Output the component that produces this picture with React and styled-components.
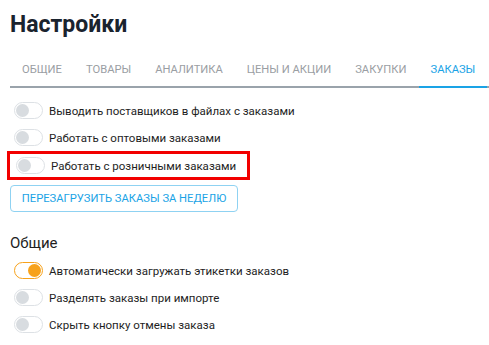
import React, { useState } from "react"
import styled, { createGlobalStyle } from "styled-components"

const GlobalStyle = createGlobalStyle`
  html, body {
    margin: 0;
    padding: 0;
    background: #fff;
  }
  body {
    font-family: Roboto, "Liberation Sans", sans-serif;
    color: #222;
  }
`

const Page = styled.div`
  padding: 9px 0 0 10px;
`

const Title = styled.h1`
  margin: 0;
  font-family: Roboto, "Liberation Sans", sans-serif;
  font-weight: 700;
  font-size: 23px;
  line-height: 32px;
  color: #1a232e;
`

const Tabs = styled.div`
  display: flex;
  margin-top: 13px;
  border-bottom: 2px solid #9aa3ab;
`

const Tab = styled.div`
  box-sizing: border-box;
  padding: 0 12px;
  height: 34px;
  line-height: 32px;
  white-space: nowrap;
  font-size: 11.2px;
  text-transform: uppercase;
  color: ${(p) => (p.active ? "#1aa3e6" : "#9a9ea3")};
  margin-bottom: -2px;
  border-bottom: 2px solid ${(p) => (p.active ? "#1aa3e6" : "transparent")};
  cursor: pointer;
`

const List = styled.div`
  display: flex;
  flex-direction: column;
  margin-top: 9px;
`

const Row = styled.label`
  display: flex;
  align-items: center;
  gap: 6px;
  height: 27px;
  padding-left: 4px;
  font-size: 11.5px;
  white-space: nowrap;
  color: #1e1e1e;
  cursor: pointer;
`

const Highlight = styled.div`
  margin-left: -3px;
  width: 243px;
  border: 3px solid #f20000;
  box-sizing: border-box;
  padding-left: 2px;
  height: 29px;
  display: flex;
  align-items: center;
`

const Track = styled.span`
  position: relative;
  box-sizing: border-box;
  width: 29px;
  height: 17px;
  border-radius: 9px;
  border: 1px solid ${(p) => (p.on ? "#f7a21b" : "#dde1e5")};
  background: #fff;
  flex: none;
`

const Knob = styled.span`
  position: absolute;
  top: 1px;
  left: ${(p) => (p.on ? "13px" : "1px")};
  width: 13px;
  height: 13px;
  border-radius: 50%;
  background: ${(p) => (p.on ? "#f7a21b" : "#d8dce0")};
`

const Button = styled.button`
  align-self: flex-start;
  margin-top: 5px;
  height: 27px;
  width: 228px;
  padding: 0;
  border: 1px solid #8fd2f2;
  border-radius: 4px;
  background: #fff;
  color: #1aa3e6;
  font-family: Roboto, "Liberation Sans", sans-serif;
  font-size: 11.2px;
  white-space: nowrap;
  text-transform: uppercase;
  cursor: pointer;
`

const Section = styled.div`
  margin-top: 21px;
  font-size: 15px;
  color: #1e1e1e;
  line-height: 20px;
`

const SubList = styled.div`
  display: flex;
  flex-direction: column;
  margin-top: 4px;
`

function Toggle({ on }) {
  return (
    <Track on={on ? 1 : 0}>
      <Knob on={on ? 1 : 0} />
    </Track>
  )
}

const tabs = ["Общие", "Товары", "Аналитика", "Цены и акции", "Закупки", "Заказы"]

export default function App() {
  const [active, setActive] = useState(5)

  return (
    <Page>
      <GlobalStyle />
      <Title>Настройки</Title>
      <Tabs>
        {tabs.map((t, i) => (
          <Tab key={t} active={i === active ? 1 : 0} onClick={() => setActive(i)}>
            {t}
          </Tab>
        ))}
      </Tabs>
      <List>
        <Row>
          <Toggle />
          Выводить поставщиков в файлах с заказами
        </Row>
        <Row>
          <Toggle />
          Работать с оптовыми заказами
        </Row>
        <Highlight>
          <Row>
            <Toggle />
            Работать с розничными заказами
          </Row>
        </Highlight>
        <Button>Перезагрузить заказы за неделю</Button>
      </List>
      <Section>Общие</Section>
      <SubList>
        <Row>
          <Toggle on />
          Автоматически загружать этикетки заказов
        </Row>
        <Row>
          <Toggle />
          Разделять заказы при импорте
        </Row>
        <Row>
          <Toggle />
          Скрыть кнопку отмены заказа
        </Row>
      </SubList>
    </Page>
  )
}
